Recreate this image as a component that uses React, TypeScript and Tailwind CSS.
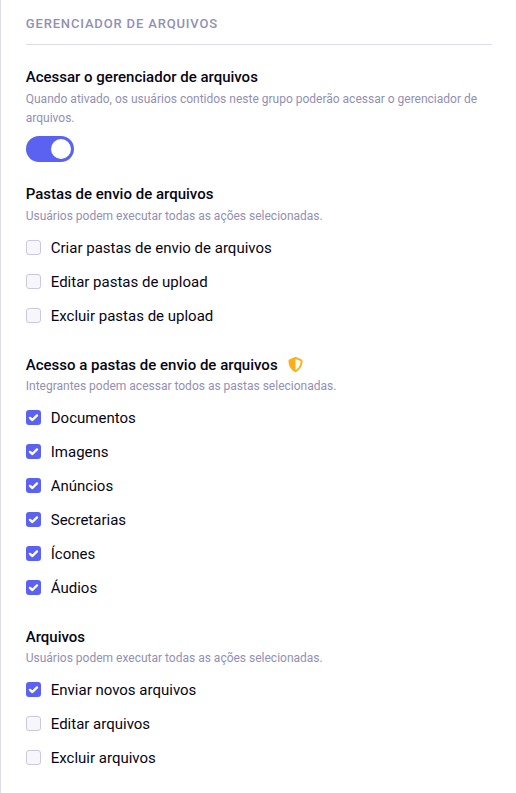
import { useState, type ReactNode } from "react";
import { FaShieldAlt } from "react-icons/fa";

function CheckItem({ label, initial }: { label: string; initial: boolean }) {
  const [checked, setChecked] = useState(initial);
  return (
    <label className="flex h-[34px] cursor-pointer items-center text-[15px]">
      <input type="checkbox" className="sr-only" checked={checked} onChange={() => setChecked(!checked)} />
      <span
        className={
          checked
            ? "mb-[2px] flex size-[15px] items-center justify-center rounded-[3px] bg-[#5b61f1]"
            : "mb-[2px] size-[15px] rounded-[3px] border border-[#cbc9de] bg-[#f7f6fb]"
        }
      >
        {checked && (
          <svg viewBox="0 0 15 15" className="size-[15px]" fill="none" stroke="#fff" strokeWidth="2.4" strokeLinecap="round" strokeLinejoin="round">
            <path d="M4 7.9 6.4 10 11 5.4" />
          </svg>
        )}
      </span>
      <span className="ml-2.5">{label}</span>
    </label>
  );
}

interface GroupProps {
  title: string;
  description: string;
  items: string[];
  checkedCount: number;
  icon?: ReactNode;
  className: string;
  gap: string;
}

function Group({ title, description, items, checkedCount, icon, className, gap }: GroupProps) {
  return (
    <section className={className}>
      <h3 className="flex h-5 items-center text-[15px] font-medium">
        {title}
        {icon}
      </h3>
      <p className={`${gap} text-xs leading-[19px] text-[#9290b3]`}>{description}</p>
      <div className="mt-[5px]">
        {items.map((item, index) => (
          <CheckItem key={item} label={item} initial={index < checkedCount} />
        ))}
      </div>
    </section>
  );
}

export default function App() {
  const [enabled, setEnabled] = useState(true);
  return (
    <main className="h-[793px] overflow-hidden border-l border-[#dddcee] bg-white pr-6 pl-[24.75px] font-['Roboto',sans-serif] text-[#070614]">
      <h2 className="h-[45px] border-b border-[#dddcee] pt-[14px] text-[13px] leading-5 font-medium tracking-[0.845px] text-[#9290b3] uppercase">
        Gerenciador de arquivos
      </h2>
      <section className="mt-[22px]">
        <h3 className="h-5 text-[15px] leading-5 font-medium">Acessar o gerenciador de arquivos</h3>
        <p className="mt-[3px] text-xs leading-[19px] text-[#9290b3]">
          Quando ativado, os usuários contidos neste grupo poderão acessar o gerenciador de arquivos.
        </p>
        <button
          role="switch"
          aria-checked={enabled}
          aria-label="Acessar o gerenciador de arquivos"
          onClick={() => setEnabled(!enabled)}
          className={
            enabled
              ? "mt-2 flex h-[26px] w-12 items-center justify-end rounded-full bg-[#5b61f1] p-[3px]"
              : "mt-2 flex h-[26px] w-12 items-center rounded-full bg-[#cbc9de] p-[3px]"
          }
        >
          <span className="size-5 rounded-full bg-white" />
        </button>
      </section>
      <Group
        className="mt-[22px]"
        gap="mt-[3px]"
        title="Pastas de envio de arquivos"
        description="Usuários podem executar todas as ações selecionadas."
        items={["Criar pastas de envio de arquivos", "Editar pastas de upload", "Excluir pastas de upload"]}
        checkedCount={0}
      />
      <Group
        className="mt-[22px]"
        gap="mt-[2px]"
        title="Acesso a pastas de envio de arquivos"
        description="Integrantes podem acessar todos as pastas selecionadas."
        items={["Documentos", "Imagens", "Anúncios", "Secretarias", "Ícones", "Áudios"]}
        checkedCount={6}
        icon={<FaShieldAlt className="mb-[2px] ml-[10.5px] size-[15px] text-[#ffae13]" />}
      />
      <Group
        className="mt-[22px]"
        gap="mt-[2px]"
        title="Arquivos"
        description="Usuários podem executar todas as ações selecionadas."
        items={["Enviar novos arquivos", "Editar arquivos", "Excluir arquivos"]}
        checkedCount={1}
      />
    </main>
  );
}
